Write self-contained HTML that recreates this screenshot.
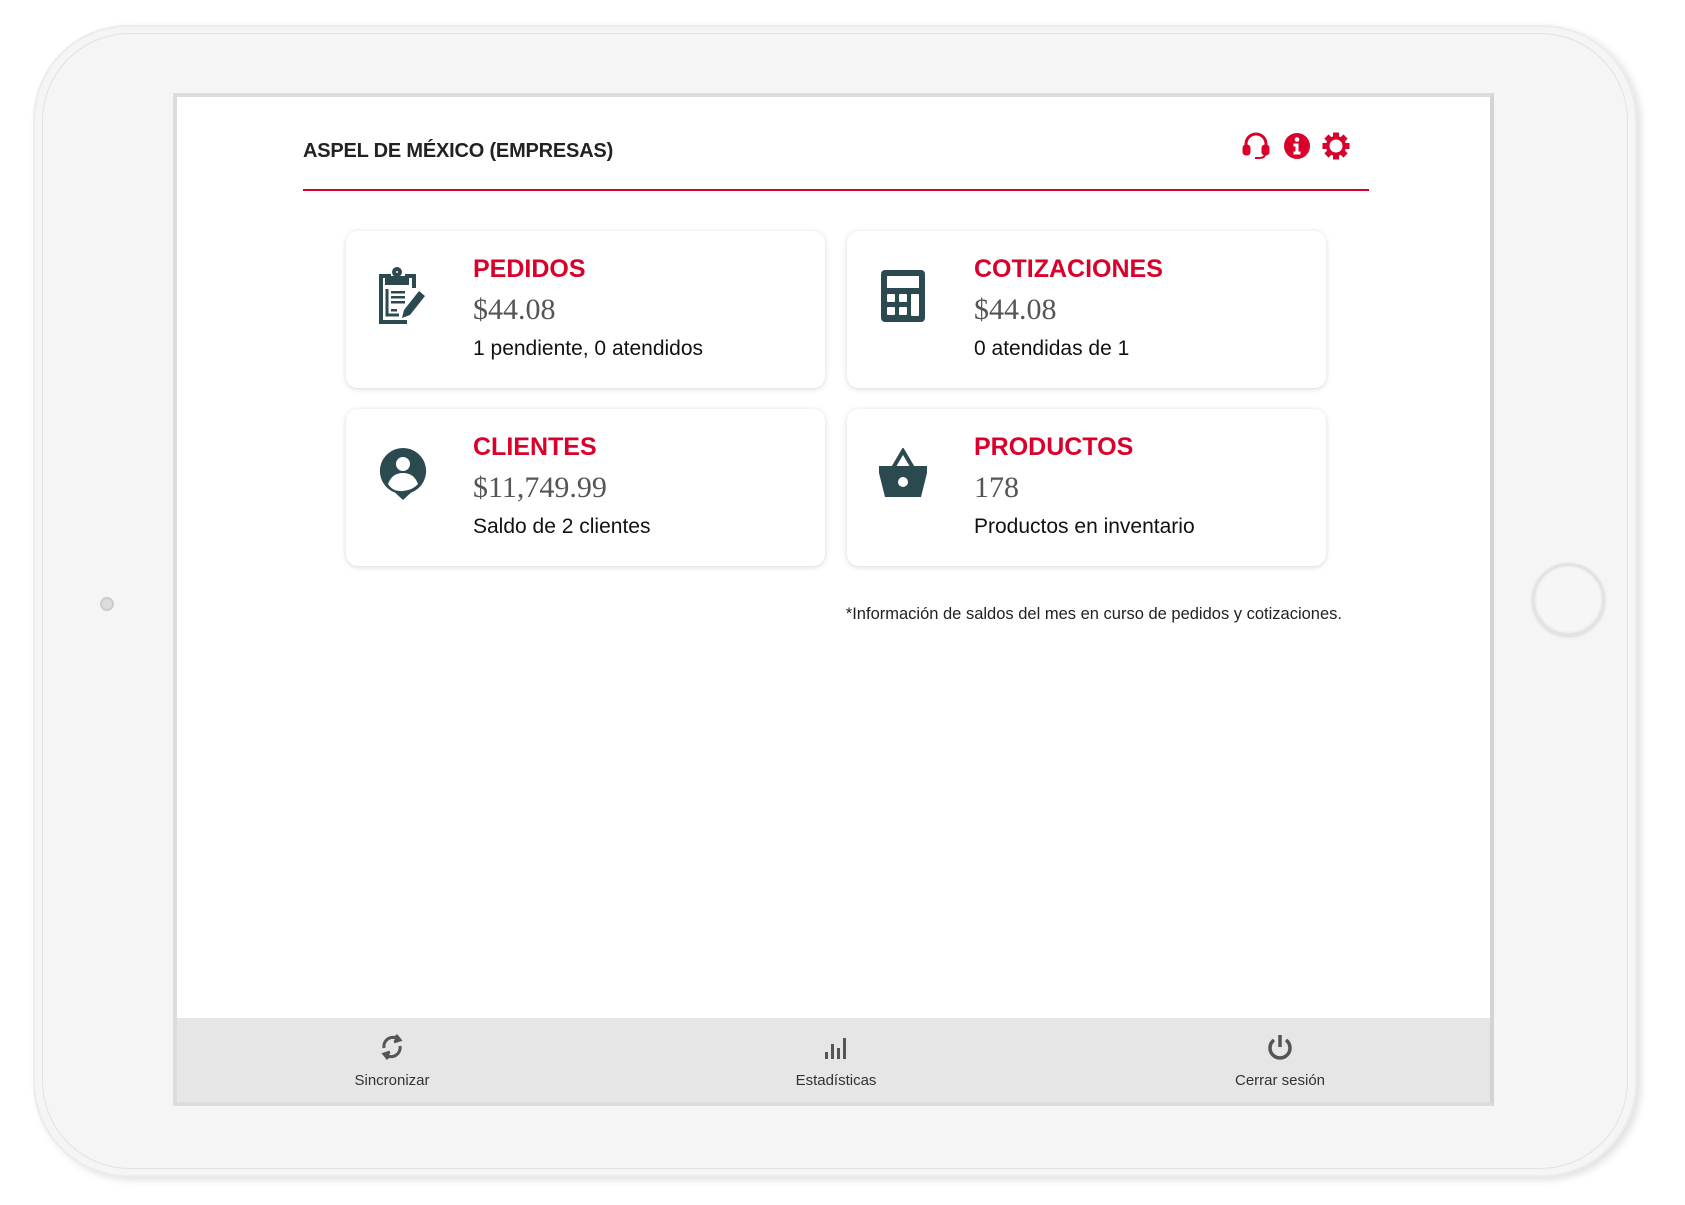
<!DOCTYPE html>
<html><head><meta charset="utf-8"><style>
*{margin:0;padding:0;box-sizing:border-box}
body{width:1685px;height:1205px;background:#fff;position:relative;overflow:hidden;font-family:"Liberation Sans",sans-serif}
.dev{position:absolute;left:33px;top:25px;width:1604px;height:1152px;border-radius:95px;background:#f5f5f5;border:2px solid #ececec;box-shadow:4px 3px 8px rgba(0,0,0,.12)}
.dev2{position:absolute;left:42px;top:33px;width:1586px;height:1136px;border-radius:88px;border:1.5px solid #e2e2e2}
.scr{position:absolute;left:173px;top:93px;width:1321px;height:1013px;background:#fff;border:4px solid #dcdcdc;border-right-color:#d4d4d4;overflow:hidden}
.abs{position:absolute}
.hdr{left:126px;top:43px;font-size:20px;font-weight:bold;color:#222;letter-spacing:-.2px}
.line{left:126px;top:92px;width:1066px;height:2px;background:#d8002c}
.card{position:absolute;width:479px;height:157px;background:#fff;border-radius:12px;box-shadow:0 1px 6px rgba(0,0,0,.16)}
.card .t{position:absolute;left:127px;top:24px;font-size:25px;font-weight:bold;color:#d9002b}
.card .a{position:absolute;left:127px;top:62px;font-family:"Liberation Serif",serif;font-size:30px;color:#555}
.card .s{position:absolute;left:127px;top:106px;font-size:21px;color:#111}
.card svg{position:absolute}
.note{right:148px;top:508px;font-size:16.5px;color:#222;white-space:nowrap}
.bar{left:0;top:921px;width:100%;height:92px;background:#e6e6e6}
.bi{position:absolute;top:0;width:200px;text-align:center;font-size:15px;color:#333}
.bi svg{display:block;margin:14px auto 10px}
</style></head><body>
<div class="dev"></div><div class="dev2"></div>
<div class="abs" style="left:100px;top:597px;width:14px;height:14px;border-radius:50%;background:#ddd;border:2px solid #ccc"></div>
<div class="abs" style="left:1532px;top:563px;width:73px;height:73px;border-radius:50%;border:3px solid #e3e3e3;background:#f6f6f6;box-shadow:inset 0 0 3px rgba(0,0,0,.08),0 1px 3px rgba(0,0,0,.12)"></div>
<div class="scr">
<div class="abs hdr">ASPEL DE MÉXICO (EMPRESAS)</div>
<div class="abs line"></div>
<svg class="abs" style="left:1064px;top:34px" width="30" height="30" viewBox="0 0 30 30" fill="none" stroke="#d9002b" stroke-width="3"><path d="M5 17V13a10 10 0 0 1 20 0v4"/><rect x="3" y="15" width="5" height="8" rx="2" fill="#d9002b"/><rect x="22" y="15" width="5" height="8" rx="2" fill="#d9002b"/><path d="M24 23q0 4-6 4h-4" stroke-width="2"/></svg>
<svg class="abs" style="left:1106px;top:35px" width="28" height="28" viewBox="0 0 28 28"><circle cx="14" cy="14" r="13" fill="#d9002b"/><circle cx="14" cy="7.5" r="2.3" fill="#fff"/><path d="M10.5 11.5h5v8h2v3h-7v-3h2v-5h-2z" fill="#fff"/></svg>
<svg class="abs" style="left:1145px;top:35px" width="28" height="28" viewBox="0 0 28 28"><g fill="#d9002b"><circle cx="14" cy="14" r="10"/><g id="tt"><rect x="11" y="0.5" width="6" height="6"/><rect x="11" y="21.5" width="6" height="6"/></g><use href="#tt" transform="rotate(45 14 14)"/><use href="#tt" transform="rotate(90 14 14)"/><use href="#tt" transform="rotate(135 14 14)"/></g><circle cx="14" cy="14" r="6.5" fill="#fff"/></svg>

<div class="card" style="left:169px;top:134px">
<svg style="left:29px;top:36px" width="56" height="60" viewBox="0 0 56 60"><g fill="none" stroke="#2b4a4f" stroke-width="4"><path d="M16 9H6v46h26"/><path d="M30 9h9v12"/><rect x="12" y="11" width="20" height="5" fill="#2b4a4f"/><circle cx="22" cy="5" r="3"/><path d="M12 22v26h12" stroke-width="3"/></g><g fill="#2b4a4f"><rect x="16" y="24" width="14" height="2.5"/><rect x="16" y="29" width="14" height="2.5"/><rect x="16" y="34" width="14" height="2.5"/><rect x="16" y="42" width="6" height="2.5"/><path d="M44 24l6 5-15 19-8 3 2-8z"/></g></svg>
<div class="t">PEDIDOS</div><div class="a">$44.08</div><div class="s">1 pendiente, 0 atendidos</div></div>

<div class="card" style="left:670px;top:134px">
<svg style="left:34px;top:39px" width="44" height="52" viewBox="0 0 44 52"><rect x="0" y="0" width="44" height="52" rx="4" fill="#2b4a4f"/><rect x="6" y="6" width="32" height="12" fill="#fff"/><rect x="6" y="24" width="8" height="8" rx="1" fill="#fff"/><rect x="18" y="24" width="8" height="8" rx="1" fill="#fff"/><rect x="6" y="37" width="8" height="8" rx="1" fill="#fff"/><rect x="18" y="37" width="8" height="8" rx="1" fill="#fff"/><rect x="30" y="24" width="8" height="22" rx="1" fill="#fff"/></svg>
<div class="t">COTIZACIONES</div><div class="a">$44.08</div><div class="s">0 atendidas de 1</div></div>

<div class="card" style="left:169px;top:312px">
<svg style="left:33px;top:38px" width="48" height="56" viewBox="0 0 48 56"><path d="M24 1a23 23 0 0 1 8 44.6L24 53l-8-7.4A23 23 0 0 1 24 1z" fill="#2b4a4f"/><circle cx="24" cy="17" r="7" fill="#fff"/><path d="M9 37q4-11 15-11t15 11q-5 6-15 7t-15-7z" fill="#fff"/></svg>
<div class="t">CLIENTES</div><div class="a">$11,749.99</div><div class="s">Saldo de 2 clientes</div></div>

<div class="card" style="left:670px;top:312px">
<svg style="left:30px;top:39px" width="52" height="52" viewBox="0 0 52 52"><path d="M16 20L26 3l10 17" fill="none" stroke="#2b4a4f" stroke-width="4"/><path d="M2 18h48v7l-6 24H8L2 25z" fill="#2b4a4f"/><circle cx="26" cy="34" r="5" fill="#fff"/></svg>
<div class="t">PRODUCTOS</div><div class="a">178</div><div class="s">Productos en inventario</div></div>

<div class="abs note">*Información de saldos del mes en curso de pedidos y cotizaciones.</div>

<div class="abs bar">
<div class="bi" style="left:115px"><svg width="30" height="30" viewBox="0 0 30 30" fill="none" stroke="#555" stroke-width="3"><path d="M7 16a9 9 0 0 1 14-9"/><path d="M19 3l4 5-6 2" fill="#555"/><path d="M23 14a9 9 0 0 1-14 9"/><path d="M11 27l-4-5 6-2" fill="#555"/></svg>Sincronizar</div>
<div class="bi" style="left:559px"><svg width="30" height="30" viewBox="0 0 30 30" fill="#555"><rect x="4" y="20" width="3" height="7"/><rect x="10" y="12" width="3" height="15"/><rect x="16" y="16" width="3" height="11"/><rect x="22" y="6" width="3" height="21"/></svg>Estadísticas</div>
<div class="bi" style="left:1003px"><svg width="30" height="30" viewBox="0 0 30 30" fill="none" stroke="#555" stroke-width="3.5"><path d="M9 8a10 10 0 1 0 12 0"/><path d="M15 3v12"/></svg>Cerrar sesión</div>
</div>
</div>
</body></html>
